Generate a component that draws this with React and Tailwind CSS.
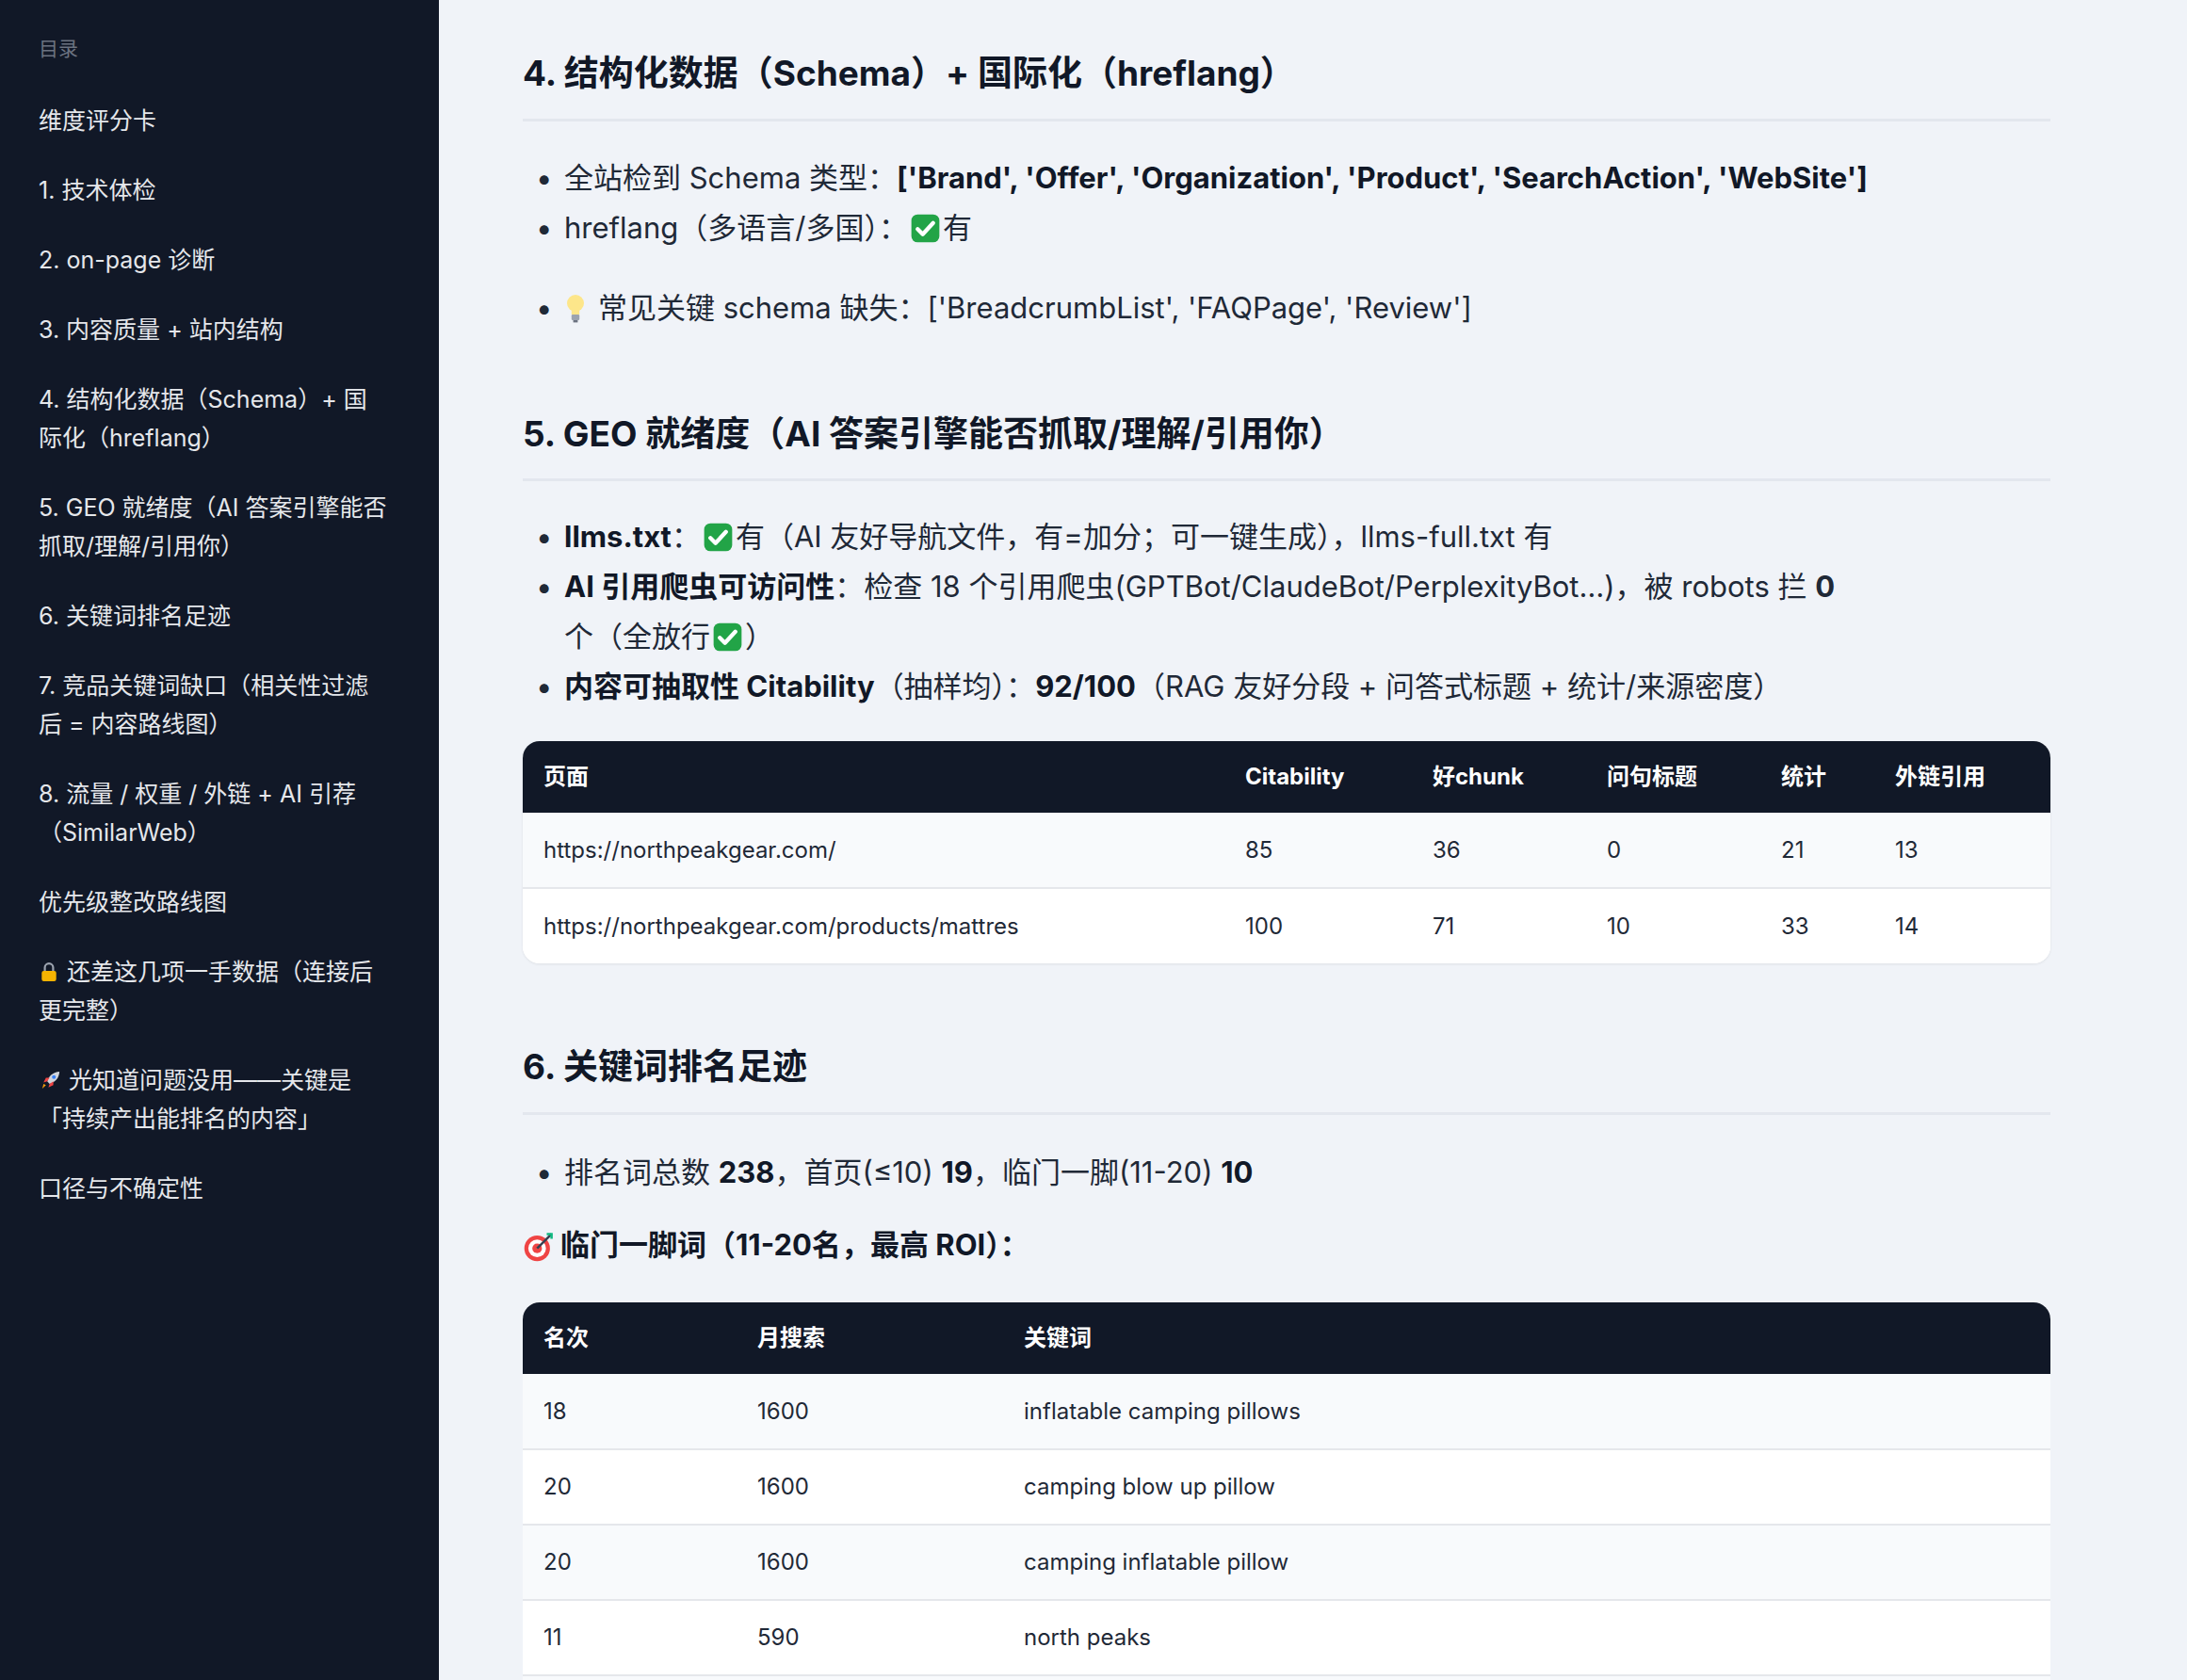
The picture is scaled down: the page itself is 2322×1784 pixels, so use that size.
import React from "react";

const Check = () => (
  <svg viewBox="0 0 20 20" className="inline-block w-[33px] h-[33px] align-[-6px] mx-[2px]">
    <rect x="1" y="1" width="18" height="18" rx="4" fill="#22a447" />
    <path d="M5 10.5l3.3 3.3L15 6.5" stroke="white" strokeWidth="2.6" fill="none" strokeLinecap="round" strokeLinejoin="round" />
  </svg>
);
const Bulb = () => (
  <svg viewBox="0 0 20 28" className="inline-block w-[24px] h-[34px] align-[-7px] mr-[12px]">
    <circle cx="10" cy="9" r="7.5" fill="#fde68a" />
    <path d="M6.5 14h7v5h-7z" fill="#fde68a" />
    <rect x="6.5" y="19" width="7" height="5" rx="1" fill="#9ca3af" />
    <rect x="8" y="24" width="4" height="2" fill="#6b7280" />
  </svg>
);
const Lock = () => (
  <svg viewBox="0 0 20 20" className="inline-block w-[22px] h-[22px] align-[-2px] mr-[8px]">
    <path d="M6 9V6a4 4 0 018 0v3" stroke="#9ca3af" strokeWidth="2" fill="none" />
    <rect x="3" y="9" width="14" height="10" rx="2" fill="#f5b301" />
  </svg>
);
const Rocket = () => (
  <svg viewBox="0 0 20 20" className="inline-block w-[26px] h-[26px] align-[-4px] mr-[6px]">
    <path d="M17 3c-5 0-9 4-10 8l2 2c4-1 8-5 8-10z" fill="#d1d5db" />
    <circle cx="12.5" cy="7.5" r="1.6" fill="#3b82f6" />
    <path d="M7 11l-3 1 2-4 3 0zM9 13l-1 3 4-2 0-3z" fill="#ef4444" />
    <path d="M6 14l-3 3 1-4z" fill="#f59e0b" />
  </svg>
);
const Target = () => (
  <svg viewBox="0 0 20 20" className="inline-block w-[34px] h-[34px] align-[-8px] mr-[6px]">
    <circle cx="9" cy="11" r="8" fill="#ef4444" />
    <circle cx="9" cy="11" r="5.5" fill="white" />
    <circle cx="9" cy="11" r="3" fill="#ef4444" />
    <path d="M9 11l9-9" stroke="#374151" strokeWidth="1.5" />
    <path d="M15 2l3 0 0 3" stroke="#10b981" strokeWidth="1.5" fill="none" />
  </svg>
);

const toc = [
  "维度评分卡",
  "1. 技术体检",
  "2. on-page 诊断",
  "3. 内容质量 + 站内结构",
  "4. 结构化数据（Schema）+ 国际化（hreflang）",
  "5. GEO 就绪度（AI 答案引擎能否抓取/理解/引用你）",
  "6. 关键词排名足迹",
  "7. 竞品关键词缺口（相关性过滤后 = 内容路线图）",
  "8. 流量 / 权重 / 外链 + AI 引荐（SimilarWeb）",
  "优先级整改路线图",
  "lock",
  "rocket",
  "口径与不确定性",
];

const citRows = [
  ["https://northpeakgear.com/", "85", "36", "0", "21", "13"],
  ["https://northpeakgear.com/products/mattres", "100", "71", "10", "33", "14"],
];

const kwRows = [
  ["18", "1600", "inflatable camping pillows"],
  ["20", "1600", "camping blow up pillow"],
  ["20", "1600", "camping inflatable pillow"],
  ["11", "590", "north peaks"],
  ["12", "590", "north peak gear"],
];

function H2({ children }) {
  return (
    <h2 className="text-[37px] font-bold text-[#111827] pb-[20px] border-b-[3px] border-[#e3e7ee]">
      {children}
    </h2>
  );
}

function Li({ children, className = "" }) {
  return (
    <li className={`flex ${className}`}>
      <span className="w-[44px] shrink-0 pl-[14px] text-[#1f2937]">•</span>
      <span>{children}</span>
    </li>
  );
}

export default function App() {
  return (
    <div
      className="flex h-[1784px] overflow-hidden bg-[#f0f3f8] text-[#1f2937]"
      style={{ fontFamily: "Inter, 'Noto Sans CJK SC', sans-serif" }}
    >
      <aside className="w-[466px] shrink-0 bg-[#111827] pl-[41px] pr-[52px] pt-[36px]">
        <div className="text-[21px] text-[#6b7280] mb-[24px]">目录</div>
        {toc.map((t) => (
          <div key={t} className="text-[25px] leading-[41px] text-[#e5e7eb] py-[16.5px]">
            {t === "lock" ? (
              <>
                <Lock />
                还差这几项一手数据（连接后更完整）
              </>
            ) : t === "rocket" ? (
              <>
                <Rocket />
                光知道问题没用——关键是「持续产出能排名的内容」
              </>
            ) : (
              t
            )}
          </div>
        ))}
      </aside>

      <main className="flex-1 pl-[89px] pr-[145px] pt-[50px]">
        <H2>4. 结构化数据（Schema）+ 国际化（hreflang）</H2>
        <ul className="text-[31px] leading-[53px] mt-[33px]">
          <Li>
            全站检到 Schema 类型：<b className="text-[#111827]">['Brand', 'Offer', 'Organization', 'Product', 'SearchAction', 'WebSite']</b>
          </Li>
          <Li>
            hreflang（多语言/多国）：<Check />有
          </Li>
        </ul>
        <ul className="text-[31px] leading-[53px] mt-[32px]">
          <Li>
            <Bulb />
            常见关键 schema 缺失：['BreadcrumbList', 'FAQPage', 'Review']
          </Li>
        </ul>

        <div className="mt-[80px]">
          <H2>5. GEO 就绪度（AI 答案引擎能否抓取/理解/引用你）</H2>
        </div>
        <ul className="text-[31px] leading-[53px] mt-[32px]">
          <Li>
            <b className="text-[#111827]">llms.txt</b>：<Check />有（AI 友好导航文件，有=加分；可一键生成），llms-full.txt 有
          </Li>
          <Li>
            <span className="block max-w-[1380px]">
              <b className="text-[#111827]">AI 引用爬虫可访问性</b>：检查 18 个引用爬虫(GPTBot/ClaudeBot/PerplexityBot…)，被 robots 拦 <b>0</b> 个（全放行<Check />）
            </span>
          </Li>
          <Li>
            <b className="text-[#111827]">内容可抽取性 Citability</b>（抽样均）：<b className="text-[#111827]">92/100</b>（RAG 友好分段 + 问答式标题 + 统计/来源密度）
          </Li>
        </ul>

        <div className="mt-[32px] rounded-[18px] overflow-hidden bg-white shadow-[0_1px_3px_rgba(0,0,0,0.08)]">
          <table className="w-full text-[24px] border-collapse">
            <colgroup>
              <col className="w-[745px]" />
              <col className="w-[199px]" />
              <col className="w-[185px]" />
              <col className="w-[185px]" />
              <col className="w-[121px]" />
              <col />
            </colgroup>
            <thead>
              <tr className="bg-[#111827] text-white h-[76px]">
                {["页面", "Citability", "好chunk", "问句标题", "统计", "外链引用"].map((h) => (
                  <th key={h} className="text-left font-bold pl-[22px]">{h}</th>
                ))}
              </tr>
            </thead>
            <tbody>
              {citRows.map((r, i) => (
                <tr key={i} className={`h-[80px] ${i % 2 === 0 ? "bg-[#f8fafc]" : "bg-white"} ${i === 0 ? "border-b-2 border-[#e5e7eb]" : ""}`}>
                  {r.map((c, j) => (
                    <td key={j} className="pl-[22px] text-[#1f2937]">{c}</td>
                  ))}
                </tr>
              ))}
            </tbody>
          </table>
        </div>

        <div className="mt-[82px]">
          <H2>6. 关键词排名足迹</H2>
        </div>
        <ul className="text-[31px] leading-[53px] mt-[34px]">
          <Li>
            排名词总数 <b className="text-[#111827]">238</b>，首页(≤10) <b className="text-[#111827]">19</b>，临门一脚(11-20) <b className="text-[#111827]">10</b>
          </Li>
        </ul>
        <div className="text-[31px] font-bold text-[#111827] mt-[28px]">
          <Target />
          临门一脚词（11-20名，最高 ROI）：
        </div>

        <div className="mt-[38px] rounded-[18px] overflow-hidden bg-white">
          <table className="w-full text-[24px] border-collapse">
            <colgroup>
              <col className="w-[227px]" />
              <col className="w-[283px]" />
              <col />
            </colgroup>
            <thead>
              <tr className="bg-[#111827] text-white h-[76px]">
                {["名次", "月搜索", "关键词"].map((h) => (
                  <th key={h} className="text-left font-bold pl-[22px]">{h}</th>
                ))}
              </tr>
            </thead>
            <tbody>
              {kwRows.map((r, i) => (
                <tr key={i} className={`h-[80px] border-b-2 border-[#e5e7eb] ${i % 2 === 0 ? "bg-[#f8fafc]" : "bg-white"}`}>
                  {r.map((c, j) => (
                    <td key={j} className="pl-[22px] text-[#1f2937]">{c}</td>
                  ))}
                </tr>
              ))}
            </tbody>
          </table>
        </div>
      </main>
    </div>
  );
}
